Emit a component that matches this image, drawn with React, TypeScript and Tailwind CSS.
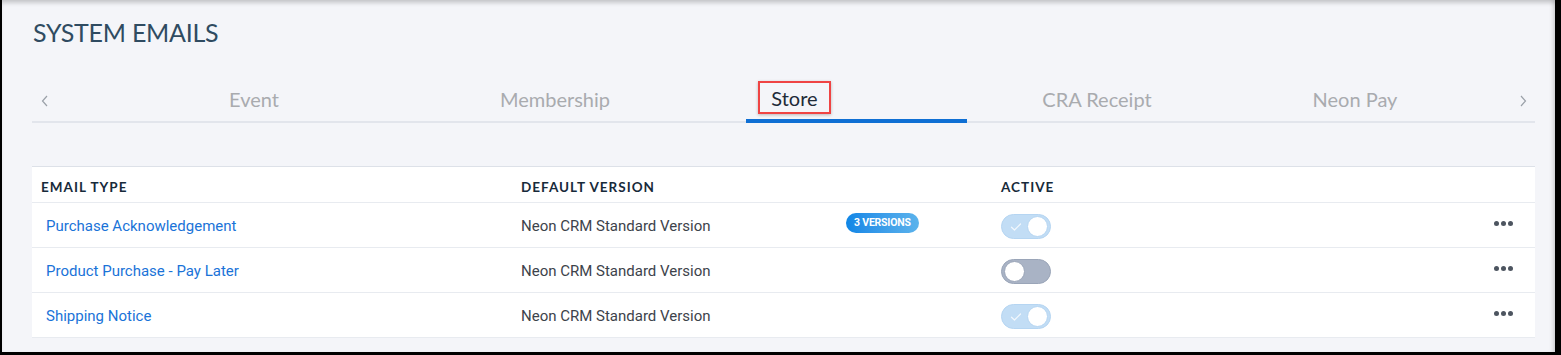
import { useState } from "react";

type Row = {
  name: string;
  version: string;
  versions?: number;
  active: boolean;
};

const ROWS: Row[] = [
  { name: "Purchase Acknowledgement", version: "Neon CRM Standard Version", versions: 3, active: true },
  { name: "Product Purchase - Pay Later", version: "Neon CRM Standard Version", active: false },
  { name: "Shipping Notice", version: "Neon CRM Standard Version", active: true },
];

function Toggle({ on }: { on: boolean }) {
  return (
    <div
      className={`flex h-[25px] w-[50px] items-center rounded-full border px-[2px] ${
        on ? "justify-end border-[#b5d5f2] bg-[#c2ddf5]" : "justify-start border-[#9aa5b8] bg-[#a9b3c5]"
      }`}
    >
      {on && (
        <svg className="mr-auto ml-[6px]" width="12" height="10" viewBox="0 0 12 10" fill="none">
          <path d="M1.5 5.2 4.5 8 10.5 2" stroke="#f3f8fd" strokeWidth="1.2" strokeLinecap="round" strokeLinejoin="round" />
        </svg>
      )}
      <div className={`h-[21px] w-[21px] rounded-full bg-white border ${on ? "border-[#b5d5f2]" : "border-[#9aa5b8]"}`} />
    </div>
  );
}

export default function App() {
  const [active] = useState("Store");

  const tabs = [
    { label: "Event", cls: "ml-[112px] w-[220px]" },
    { label: "Membership", cls: "ml-[81px] w-[220px]" },
    { label: "Store", cls: "ml-[81px] w-[221px]" },
    { label: "CRA Receipt", cls: "ml-[20px] w-[220px]" },
    { label: "Neon Pay", cls: "ml-[38px] w-[220px]" },
  ];

  return (
    <div className="h-[355px] w-[1561px] overflow-hidden bg-black">
      <div className="h-[352px] w-[1555px] border-l-[2px] border-black bg-[#f4f5f9] shadow-[inset_0_5px_4px_-2px_rgba(0,0,0,0.18),inset_-4px_0_4px_-2px_rgba(0,0,0,0.15)] font-['Lato','Noto_Sans',sans-serif]">
        <div className="pl-[30px] pr-[20px] pt-[15px]">
          <h1 className="ml-[1px] text-[25px] leading-[34px] tracking-[-0.01em] text-[#2f4b61]">SYSTEM EMAILS</h1>

          {/* tabs */}
          <div className="relative mt-[32px] h-[42px] w-[1503px] border-b-2 border-[#e2e5ec]">
            <div className="flex h-full items-center pb-[4px]">
              {tabs.map((t) => {
                const isActive = t.label === active;
                return (
                  <div key={t.label} className={`relative flex h-full shrink-0 items-center ${t.cls} ${isActive ? "justify-start" : "justify-center"}`}>
                    {isActive ? (
                      <span className="ml-[12px] mt-[-3px] flex h-[33px] w-[73px] items-center justify-center border-2 border-[#ef4444] text-[20px] text-[#1e2b38] shadow-[0_1px_3px_rgba(0,0,0,0.25)]">
                        {t.label}
                      </span>
                    ) : (
                      <span className="text-[20px] text-[#a9abaf]">{t.label}</span>
                    )}
                    {isActive && <div className="absolute bottom-[-6px] left-0 h-[4px] w-full bg-[#0f6fd4]" />}
                  </div>
                );
              })}
            </div>
            <svg className="absolute left-[9px] top-[14px]" width="8" height="12" viewBox="0 0 8 12" fill="none">
              <path d="M6 1 1.5 6 6 11" stroke="#9aa0a8" strokeWidth="1.2" />
            </svg>
            <svg className="absolute left-[1487px] top-[14px]" width="8" height="12" viewBox="0 0 8 12" fill="none">
              <path d="M2 1 6.5 6 2 11" stroke="#9aa0a8" strokeWidth="1.2" />
            </svg>
          </div>

          {/* table */}
          <div className="mt-[43px] w-[1503px] border-t border-[#dde1e8] bg-white">
            <div className="flex h-[36px] items-center border-b border-[#e8ebf0] pt-[6px] text-[13.5px] font-bold tracking-[0.075em] text-[#172a3a]">
              <div className="w-[480px] pl-[9px]">EMAIL TYPE</div>
              <div className="w-[480px] pl-[9px]">DEFAULT VERSION</div>
              <div className="pl-[9px]">ACTIVE</div>
            </div>
            {ROWS.map((r) => (
              <div key={r.name} className="flex h-[45px] items-center border-b border-[#e8ebf0] font-['Roboto',sans-serif] text-[15px]">
                <div className="w-[480px] pl-[14px] pt-[3px] text-[#1a73d8]">{r.name}</div>
                <div className="flex w-[480px] items-center pl-[9px] text-[#3d434b]">
                  <span className="w-[325px] pt-[3px]">{r.version}</span>
                  {r.versions && (
                    <span className="mt-[-5px] rounded-full bg-gradient-to-r from-[#0e86e6] to-[#5bb3ec] px-[8px] py-[3px] text-[10.5px] font-bold leading-[14px] tracking-[-0.02em] text-white">
                      {r.versions} VERSIONS
                    </span>
                  )}
                </div>
                <div className="pl-[9px] pt-[3px]">
                  <Toggle on={r.active} />
                </div>
                <div className="ml-auto mr-[22px] mt-[-4px] flex gap-[2px]">
                  <span className="h-[5px] w-[5px] rounded-full bg-[#4d5560]" />
                  <span className="h-[5px] w-[5px] rounded-full bg-[#4d5560]" />
                  <span className="h-[5px] w-[5px] rounded-full bg-[#4d5560]" />
                </div>
              </div>
            ))}
          </div>
        </div>
      </div>
    </div>
  );
}
